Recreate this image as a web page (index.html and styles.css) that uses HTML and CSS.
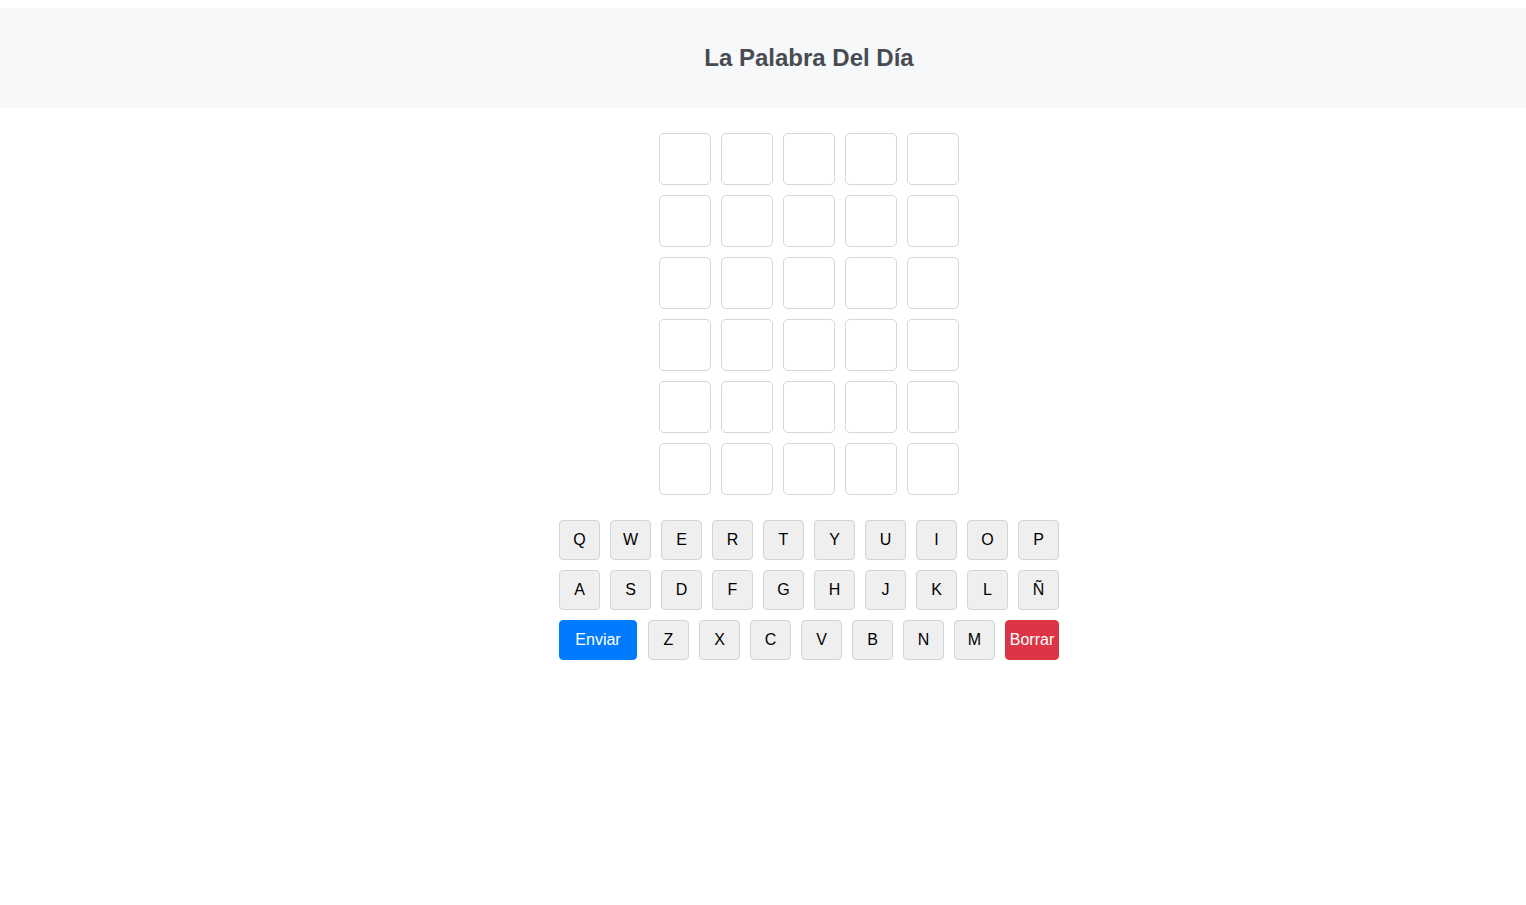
FILE: index.html
```html
<!DOCTYPE html>
<html lang="es">
<head>
<meta charset="utf-8">
<title>La Palabra Del Día</title>
<link rel="stylesheet" href="styles.css">
</head>
<body>
<header class="header"><h1 class="title">La Palabra Del Día</h1></header>
<main class="main">
  <div class="board">
    <div class="row"><div class="tile"></div><div class="tile"></div><div class="tile"></div><div class="tile"></div><div class="tile"></div></div>
    <div class="row"><div class="tile"></div><div class="tile"></div><div class="tile"></div><div class="tile"></div><div class="tile"></div></div>
    <div class="row"><div class="tile"></div><div class="tile"></div><div class="tile"></div><div class="tile"></div><div class="tile"></div></div>
    <div class="row"><div class="tile"></div><div class="tile"></div><div class="tile"></div><div class="tile"></div><div class="tile"></div></div>
    <div class="row"><div class="tile"></div><div class="tile"></div><div class="tile"></div><div class="tile"></div><div class="tile"></div></div>
    <div class="row"><div class="tile"></div><div class="tile"></div><div class="tile"></div><div class="tile"></div><div class="tile"></div></div>
  </div>
  <div class="keyboard">
    <div class="krow">
      <button class="key">Q</button><button class="key">W</button><button class="key">E</button><button class="key">R</button><button class="key">T</button><button class="key">Y</button><button class="key">U</button><button class="key">I</button><button class="key">O</button><button class="key">P</button>
    </div>
    <div class="krow">
      <button class="key">A</button><button class="key">S</button><button class="key">D</button><button class="key">F</button><button class="key">G</button><button class="key">H</button><button class="key">J</button><button class="key">K</button><button class="key">L</button><button class="key">Ñ</button>
    </div>
    <div class="krow">
      <button class="key key-enter">Enviar</button><button class="key key-after-enter">Z</button><button class="key">X</button><button class="key">C</button><button class="key">V</button><button class="key">B</button><button class="key">N</button><button class="key">M</button><button class="key key-del">Borrar</button>
    </div>
  </div>
</main>
</body>
</html>
```
FILE: styles.css
```css
html, body {
  margin: 0;
  padding: 0;
  background: #ffffff;
  font-family: "Liberation Sans", Arial, sans-serif;
}
.header {
  margin-top: 8px;
  height: 100px;
  background: #f7f8fa;
  display: flex;
  align-items: center;
  justify-content: center;
  padding-left: 92px;
}
.title {
  margin: 0;
  font-size: 24px;
  font-weight: bold;
  color: #474c52;
}
.main {
  display: flex;
  flex-direction: column;
  align-items: center;
  padding-left: 92px;
  padding-top: 25px;
}
.board {
  display: flex;
  flex-direction: column;
  gap: 10px;
}
.row {
  display: flex;
  gap: 10px;
}
.tile {
  width: 52px;
  height: 52px;
  box-sizing: border-box;
  border: 1px solid #d3d6db;
  border-radius: 5px;
  background: #fff;
}
.keyboard {
  margin-top: 25px;
  display: flex;
  flex-direction: column;
  gap: 10px;
  width: 500px;
}
.krow {
  display: flex;
  gap: 10px;
}
.key {
  width: 41px;
  height: 40px;
  flex: none;
  box-sizing: border-box;
  border: 1px solid #d1d5db;
  border-radius: 4px;
  background: #efefef;
  color: #000;
  font-family: "Liberation Sans", Arial, sans-serif;
  font-size: 16px;
  padding: 0;
  display: flex;
  align-items: center;
  justify-content: center;
}
.key-enter {
  width: 78px;
  background: #007bff;
  border-color: #007bff;
  color: #fff;
}
.key-after-enter {
  margin-left: 1px;
}
.key-del {
  width: 54px;
  background: #dc3545;
  border-color: #dc3545;
  color: #fff;
}
```
